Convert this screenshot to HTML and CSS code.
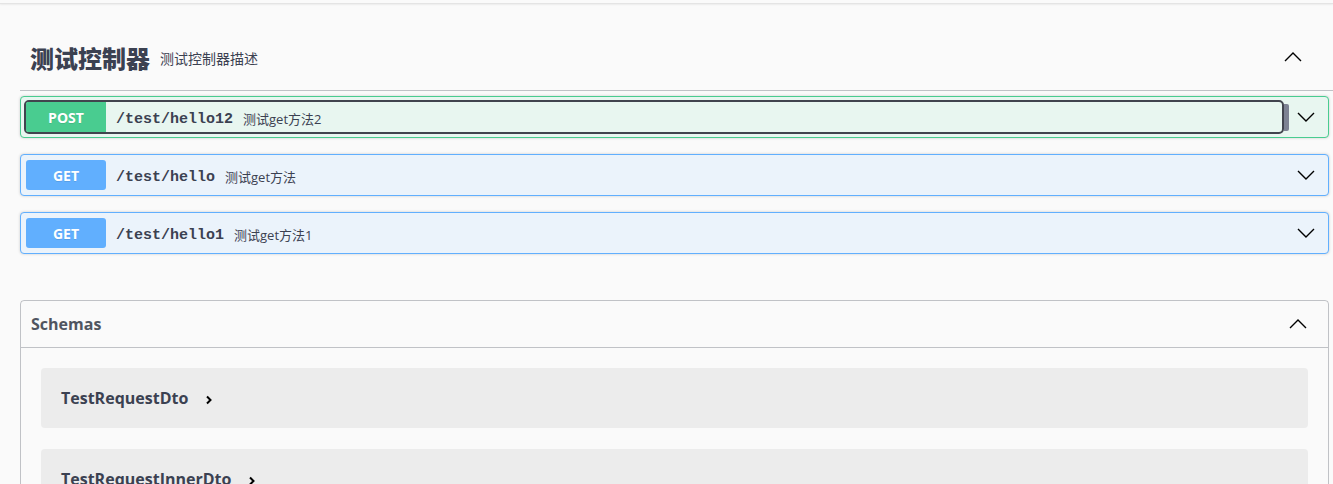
FILE: index.html
```html
<!DOCTYPE html>
<html lang="zh">
<head>
<meta charset="utf-8">
<link rel="stylesheet" href="styles.css">
</head>
<body>
<div class="topbar"></div>
<div class="wrapper">
  <section class="tag-section">
    <h3 class="tag-heading">
      <span class="tag-title">测试控制器</span>
      <small class="tag-desc">测试控制器描述</small>
      <button class="expand">
        <svg width="20" height="20" viewBox="0 0 20 20"><path d="M2 14 L10 6 L18 14" fill="none" stroke="#000" stroke-width="1.4"/></svg>
      </button>
    </h3>
    <div class="opblock post">
      <div class="summary">
        <div class="control focused">
          <span class="method">POST</span>
          <span class="path">/test/hello12</span>
          <span class="desc">测试get方法2</span>
        </div>
        <span class="copy"></span>
        <button class="arrow">
          <svg width="20" height="20" viewBox="0 0 20 20"><path d="M2 6 L10 14 L18 6" fill="none" stroke="#000" stroke-width="1.4"/></svg>
        </button>
      </div>
    </div>
    <div class="opblock get">
      <div class="summary">
        <div class="control">
          <span class="method">GET</span>
          <span class="path">/test/hello</span>
          <span class="desc">测试get方法</span>
        </div>
        <button class="arrow">
          <svg width="20" height="20" viewBox="0 0 20 20"><path d="M2 6 L10 14 L18 6" fill="none" stroke="#000" stroke-width="1.4"/></svg>
        </button>
      </div>
    </div>
    <div class="opblock get">
      <div class="summary">
        <div class="control">
          <span class="method">GET</span>
          <span class="path">/test/hello1</span>
          <span class="desc">测试get方法1</span>
        </div>
        <button class="arrow">
          <svg width="20" height="20" viewBox="0 0 20 20"><path d="M2 6 L10 14 L18 6" fill="none" stroke="#000" stroke-width="1.4"/></svg>
        </button>
      </div>
    </div>
  </section>

  <section class="models">
    <h4 class="models-head">
      <span>Schemas</span>
      <svg width="20" height="20" viewBox="0 0 20 20"><path d="M2 14 L10 6 L18 14" fill="none" stroke="#000" stroke-width="1.4"/></svg>
    </h4>
    <div class="models-body">
      <div class="model-box">
        <span class="model-name">TestRequestDto</span>
        <svg class="model-chev" width="8" height="10" viewBox="0 0 8 10"><path d="M2 1.5 L5.5 5 L2 8.5" fill="none" stroke="#000" stroke-width="2"/></svg>
      </div>
      <div class="model-box">
        <span class="model-name">TestRequestInnerDto</span>
        <svg class="model-chev" width="8" height="10" viewBox="0 0 8 10"><path d="M2 1.5 L5.5 5 L2 8.5" fill="none" stroke="#000" stroke-width="2"/></svg>
      </div>
    </div>
  </section>
</div>
</body>
</html>
```

FILE: styles.css
```css
* { box-sizing: border-box; }
html, body {
  margin: 0;
  padding: 0;
  background: #fafafa;
  font-family: "Open Sans", "Noto Sans CJK SC", sans-serif;
  color: #3b4151;
  overflow: hidden;
}
.topbar {
  height: 4px;
  border-bottom: 1px solid #e4e4e4;
  box-shadow: 0 1px 2px rgba(0,0,0,0.06);
  background: #fafafa;
}
.wrapper {
  padding: 20px 4px 0 20px;
}
.tag-heading {
  margin: 0 -4px 5px 0;
  height: 67px;
  display: flex;
  align-items: center;
  padding: 0 20px 0 10px;
  border-bottom: 1px solid rgba(59,65,81,0.3);
  font-weight: normal;
}
.tag-title {
  font-size: 24px;
  font-weight: 800;
  color: #3b4151;
  letter-spacing: 0;
}
.tag-desc {
  font-size: 14px;
  margin-left: 10px;
  margin-top: 2px;
  color: #3b4151;
}
.expand {
  margin-left: auto;
  background: none;
  border: none;
  padding: 0;
  display: flex;
  margin-right: 10px;
}
.opblock {
  border: 1px solid;
  border-radius: 4px;
  margin-bottom: 16px;
  box-shadow: 0 0 3px rgba(0,0,0,0.19);
}
.opblock.post {
  border-color: #49cc90;
  background: #e8f6f0;
}
.opblock.get {
  border-color: #61affe;
  background: #ebf3fb;
}
.summary {
  display: flex;
  align-items: center;
  padding: 5px;
  height: 40px;
}
.control {
  flex: 1;
  display: flex;
  align-items: center;
  height: 30px;
  border-radius: 4px;
}
.control.focused {
  height: 34px;
  margin: -2px 0 -2px -2px;
  border: 2px solid #41444e;
  border-radius: 5px;
}
.method {
  width: 80px;
  height: 30px;
  border-radius: 3px;
  color: #fff;
  font-size: 14px;
  font-weight: 700;
  display: flex;
  align-items: center;
  justify-content: center;
  text-shadow: 0 1px 0 rgba(0,0,0,0.1);
}
.focused .method { border-radius: 2px 0 0 2px; }
.post .method { background: #49cc90; }
.get .method { background: #61affe; }
.path {
  font-family: "Liberation Mono", "DejaVu Sans Mono", monospace;
  font-size: 15px;
  font-weight: 700;
  color: #3b4151;
  margin-left: 10px;
  padding-top: 4px;
  letter-spacing: 0;
}
.desc {
  font-size: 13px;
  margin-left: 10px;
  padding-top: 2px;
  color: #3b4151;
}
.copy {
  width: 5px;
  height: 27px;
  background: #7d8293;
  border-radius: 0 2px 2px 0;
}
.arrow {
  background: none;
  border: none;
  padding: 0;
  display: flex;
  width: 34px;
  justify-content: center;
}
.models {
  margin-top: 46px;
  border: 1px solid rgba(59,65,81,0.3);
  border-radius: 4px;
  height: 400px;
}
.models-head {
  margin: 0;
  height: 47px;
  display: flex;
  align-items: center;
  justify-content: space-between;
  padding: 0 20px 0 10px;
  border-bottom: 1px solid rgba(59,65,81,0.3);
  font-size: 16px;
  font-weight: 700;
  color: #505560;
}
.models-body {
  padding: 20px;
  display: flex;
  flex-direction: column;
  gap: 21px;
}
.model-box {
  height: 60px;
  background: #ececec;
  border-radius: 4px;
  display: flex;
  align-items: center;
  padding: 0 20px;
}
.model-name {
  font-size: 16px;
  font-weight: 700;
  color: #3b4151;
}
.model-chev {
  margin-left: 17px;
  margin-top: 3px;
}
```
